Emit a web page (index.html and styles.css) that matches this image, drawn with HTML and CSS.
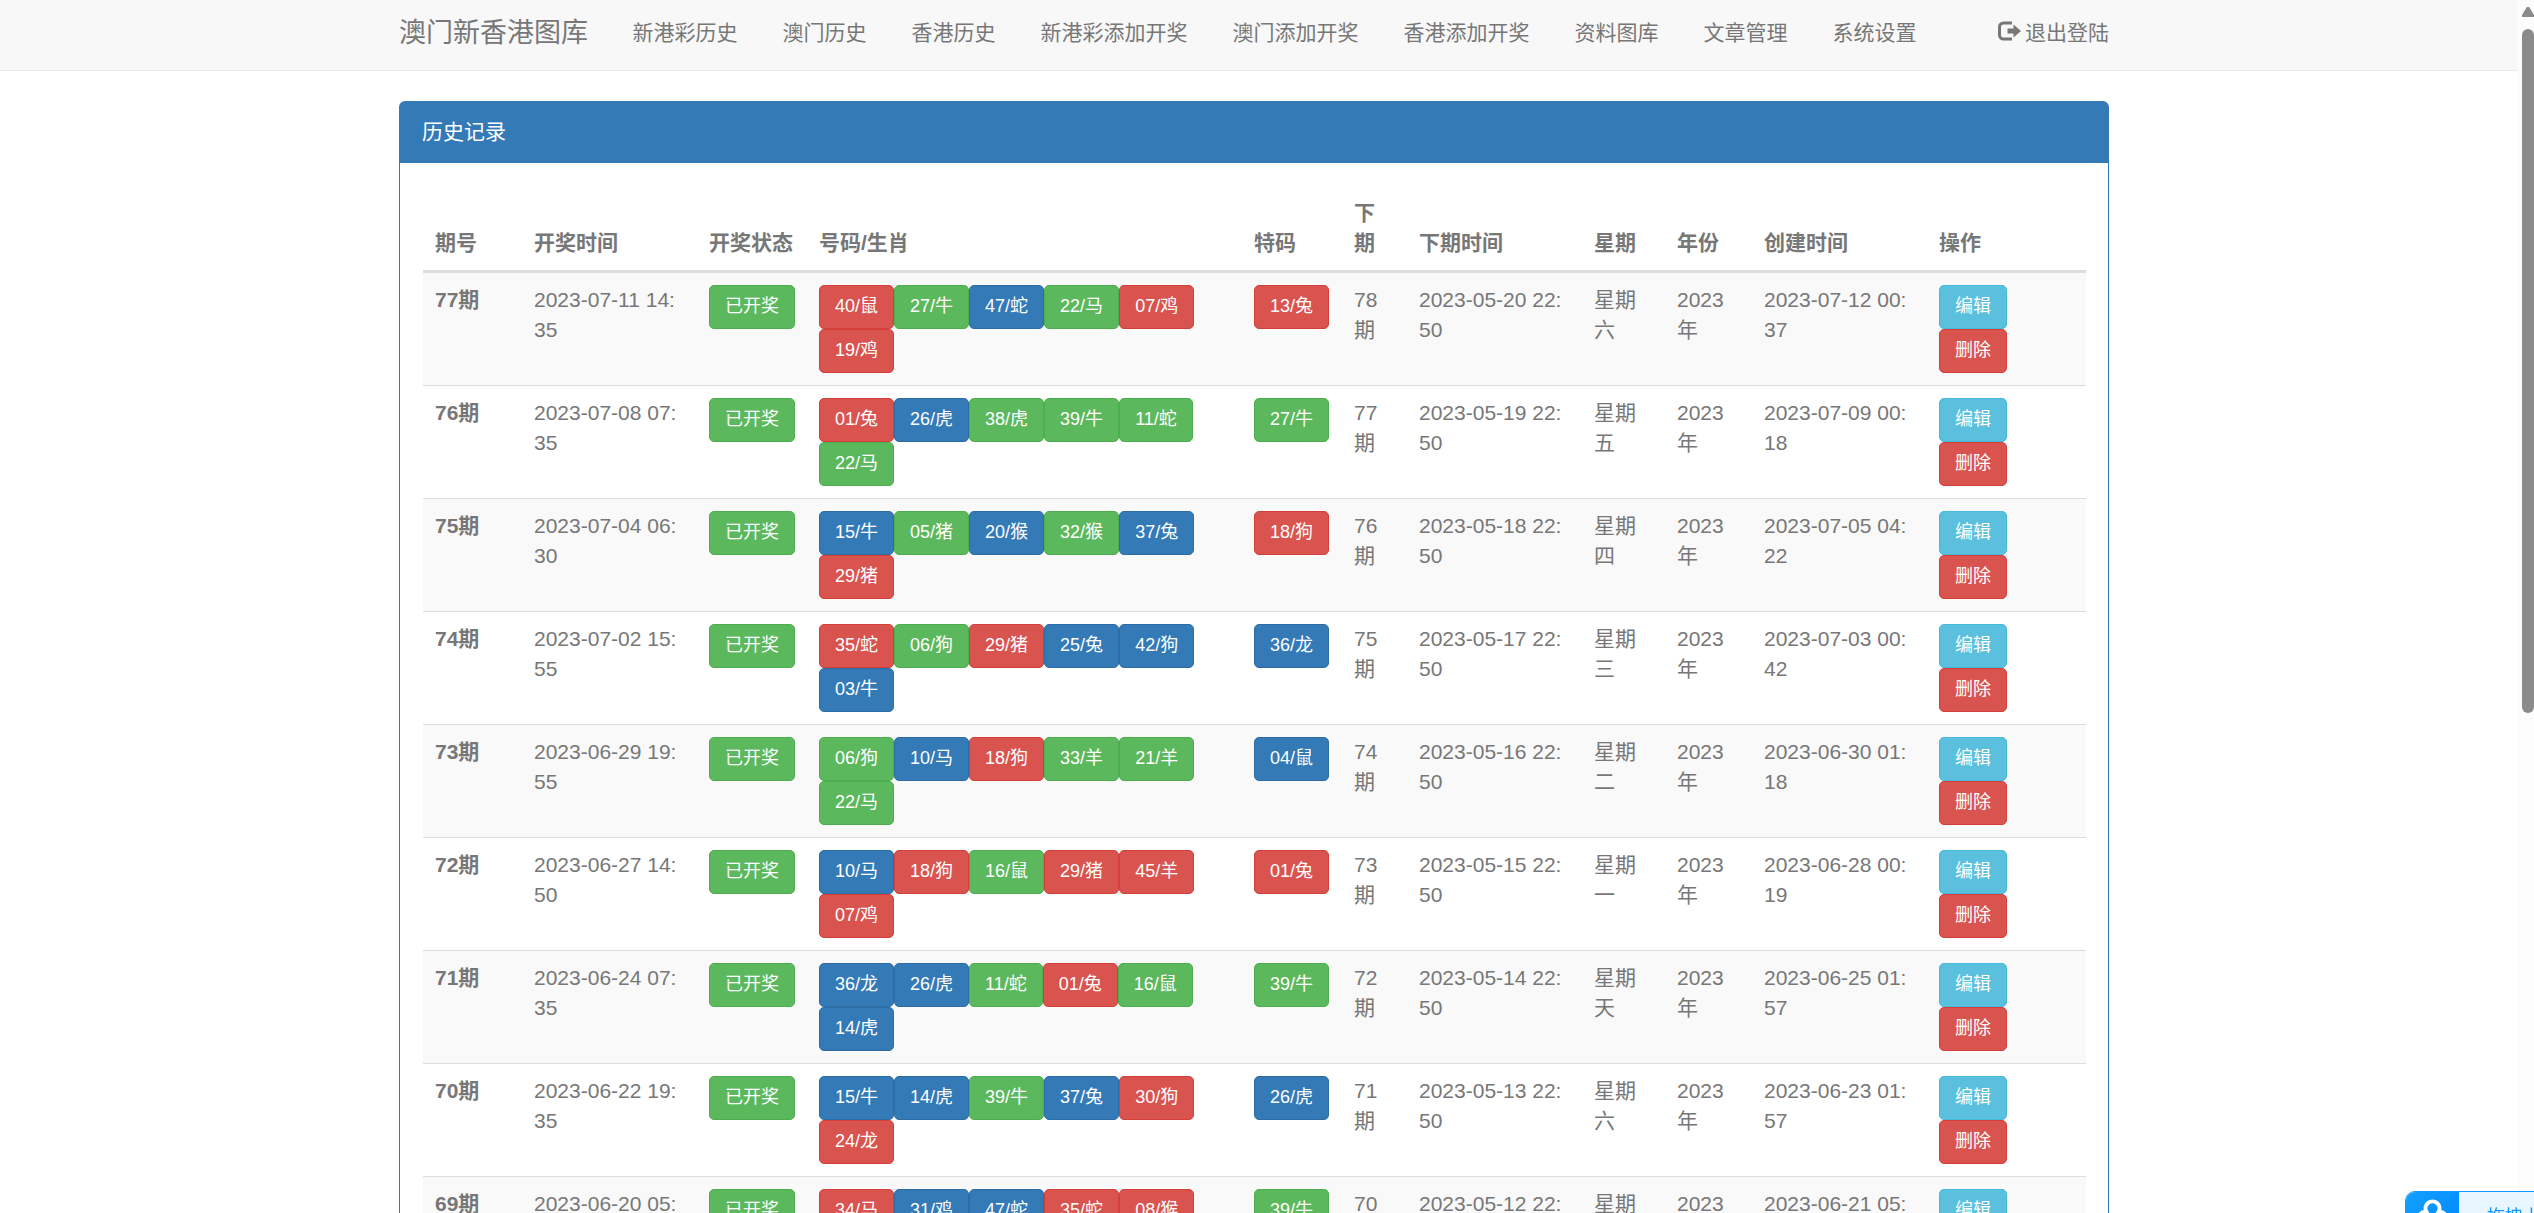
FILE: index.html
```html
<!DOCTYPE html>
<html lang="zh-CN">
<head>
  <meta charset="UTF-8">
  <meta name="viewport" content="width=device-width, initial-scale=1">
  <title>澳门新香港图库</title>
  <link rel="stylesheet" href="styles.css">
</head>
<body>
  <nav class="navbar">
    <div class="container">
      <a class="navbar-brand">澳门新香港图库</a>
      <ul class="nav">
        <li>新港彩历史</li>
        <li>澳门历史</li>
        <li>香港历史</li>
        <li>新港彩添加开奖</li>
        <li>澳门添加开奖</li>
        <li>香港添加开奖</li>
        <li>资料图库</li>
        <li>文章管理</li>
        <li>系统设置</li>
      </ul>
      <a class="logout">
        <svg viewBox="0 0 23 20" width="23" height="20">
          <path d="M14 2H5.500a4 4 0 0 0-4 4v8a4 4 0 0 0 4 4H14" fill="none" stroke="#777" stroke-width="3"/>
          <path d="M9.500 7.500h6V3.500l7.500 6.500-7.500 6.500v-4h-6z" fill="#777"/>
        </svg>
        退出登陆
      </a>
    </div>
  </nav>

  <div class="container">
    <div class="panel">
      <div class="panel-heading">历史记录</div>
      <div class="panel-body">
        <table class="table">
          <colgroup>
            <col class="c-no"><col class="c-time"><col class="c-state"><col class="c-balls"><col class="c-special"><col class="c-next">
            <col class="c-time"><col class="c-week"><col class="c-year"><col class="c-time"><col class="c-action">
          </colgroup>
          <thead>
            <tr>
              <th>期号</th><th>开奖时间</th><th>开奖状态</th><th>号码/生肖</th><th>特码</th><th>下期</th>
              <th>下期时间</th><th>星期</th><th>年份</th><th>创建时间</th><th>操作</th>
            </tr>
          </thead>
          <tbody id="list"></tbody>
        </table>
      </div>
    </div>
  </div>

  <!-- Scrollbar -->
  <div class="scrollbar">
    <div class="arrow"></div>
    <div class="thumb"></div>
  </div>

  <!-- Upload widget -->
  <div class="upload">
    <div class="upload-icon">
      <svg viewBox="0 0 54 44" width="54" height="44">
        <path d="M20 33h-1a6.500 6.500 0 0 1 0-13h1.500a7 7 0 1 1 12 0H34a6.500 6.500 0 0 1 0 13h-1" fill="none" stroke="#fff" stroke-width="4"/>
      </svg>
    </div>
    <div class="upload-text">拖拽上传</div>
  </div>

  <script>
    // 期号, 开奖时间, 号码, 特码, 下期时间, 星期, 创建时间
    const rows = [
      [77, '2023-07-11 14:35', '40/鼠 27/牛 47/蛇 22/马 07/鸡 19/鸡', '13/兔', '2023-05-20 22:50', '六', '2023-07-12 00:37'],
      [76, '2023-07-08 07:35', '01/兔 26/虎 38/虎 39/牛 11/蛇 22/马', '27/牛', '2023-05-19 22:50', '五', '2023-07-09 00:18'],
      [75, '2023-07-04 06:30', '15/牛 05/猪 20/猴 32/猴 37/兔 29/猪', '18/狗', '2023-05-18 22:50', '四', '2023-07-05 04:22'],
      [74, '2023-07-02 15:55', '35/蛇 06/狗 29/猪 25/兔 42/狗 03/牛', '36/龙', '2023-05-17 22:50', '三', '2023-07-03 00:42'],
      [73, '2023-06-29 19:55', '06/狗 10/马 18/狗 33/羊 21/羊 22/马', '04/鼠', '2023-05-16 22:50', '二', '2023-06-30 01:18'],
      [72, '2023-06-27 14:50', '10/马 18/狗 16/鼠 29/猪 45/羊 07/鸡', '01/兔', '2023-05-15 22:50', '一', '2023-06-28 00:19'],
      [71, '2023-06-24 07:35', '36/龙 26/虎 11/蛇 01/兔 16/鼠 14/虎', '39/牛', '2023-05-14 22:50', '天', '2023-06-25 01:57'],
      [70, '2023-06-22 19:35', '15/牛 14/虎 39/牛 37/兔 30/狗 24/龙', '26/虎', '2023-05-13 22:50', '六', '2023-06-23 01:57'],
      [69, '2023-06-20 05:35', '34/马 31/鸡 47/蛇 35/蛇 08/猴 12/龙', '39/牛', '2023-05-12 22:50', '五', '2023-06-21 05:35']
    ];
    const red = [1, 2, 7, 8, 12, 13, 18, 19, 23, 24, 29, 30, 34, 35, 40, 45, 46];
    const blue = [3, 4, 9, 10, 14, 15, 20, 25, 26, 31, 36, 37, 41, 42, 47, 48];

    // Ball button, colored by number
    function ball(text) {
      const n = parseInt(text, 10);
      const cls = red.includes(n) ? 'danger' : blue.includes(n) ? 'primary' : 'success';
      return `<span class="btn btn-${cls}">${text}</span>`;
    }

    document.getElementById('list').innerHTML = rows.map(r => `
      <tr>
        <th>${r[0]}期</th>
        <td>${r[1]}</td>
        <td><div class="btns"><span class="btn btn-success">已开奖</span></div></td>
        <td><div class="btns">${r[2].split(' ').map(ball).join('')}</div></td>
        <td><div class="btns">${ball(r[3])}</div></td>
        <td>${r[0] + 1}期</td>
        <td>${r[4]}</td>
        <td>星期${r[5]}</td>
        <td>2023年</td>
        <td>${r[6]}</td>
        <td><div class="btns"><span class="btn btn-info">编辑</span><span class="btn btn-danger">删除</span></div></td>
      </tr>`).join('');
  </script>
</body>
</html>
```
FILE: styles.css
```css
* { box-sizing: border-box; }
html, body { margin: 0; height: 100%; overflow: hidden; }
body {
  font-family: "Liberation Sans", "Noto Sans CJK SC", sans-serif;
  font-size: 21px; line-height: 30px; color: #777; background: #fff;
}
.container { width: 1710px; margin-left: 399px; }

/* Navbar */
.navbar { height: 71px; background: #f8f8f8; border-bottom: 1px solid #e7e7e7; margin-bottom: 30px; }
.navbar .container { display: flex; padding-top: 18px; }
.navbar-brand { font-size: 27px; margin-right: 22px; white-space: nowrap; }
.nav { display: flex; list-style: none; margin: 0; padding: 0; }
.nav li { padding: 0 22.5px; white-space: nowrap; }
.logout { display: flex; align-items: center; gap: 4px; height: 30px; margin-left: auto; }
.logout svg { margin-bottom: 4px; }

/* Panel */
.panel { border: 1px solid #337ab7; border-radius: 6px; }
.panel-heading { padding: 15px 22px 16px; background: #337ab7; color: #fff; border-radius: 4px 4px 0 0; }
.panel-body { padding: 23px; }

/* Table */
.table { width: 1663px; table-layout: fixed; border-collapse: separate; border-spacing: 0; word-break: break-all; }
.table th, .table td { padding: 12px; text-align: left; vertical-align: top; }
.table th { font-weight: bold; }
.table thead th { vertical-align: bottom; border-bottom: 3px solid #ddd; }
.table tbody tr + tr > * { border-top: 1px solid #ddd; }
.table tbody tr:nth-child(odd) { background: #f9f9f9; }
.c-no { width: 99px; }
.c-time { width: 175px; }
.c-state { width: 110px; }
.c-balls { width: 435px; }
.c-special { width: 100px; }
.c-next { width: 65px; }
.c-week { width: 83px; }
.c-year { width: 87px; }
.c-action { width: 159px; }

/* Buttons */
.btns { display: flex; flex-wrap: wrap; height: 88px; align-content: flex-start; }
.btn {
  height: 44px; padding: 7px 15px 8px; border: 1px solid; border-radius: 5px;
  font-size: 18px; line-height: 27px; color: #fff; white-space: nowrap;
}
.btn-success { background: #5cb85c; border-color: #4cae4c; }
.btn-danger { background: #d9534f; border-color: #d43f3a; }
.btn-primary { background: #337ab7; border-color: #2e6da4; }
.btn-info { background: #5bc0de; border-color: #46b8da; }

/* Scrollbar */
.scrollbar { position: fixed; top: 0; right: 0; bottom: 0; width: 17px; padding: 7px 0 0 5px; background: #fcfcfc; }
.arrow { width: 12px; height: 10px; background: #8b8b8b; clip-path: polygon(40% 0, 60% 0, 100% 80%, 100% 100%, 0 100%, 0 80%); }
.thumb { width: 12px; height: 684px; margin-top: 12px; border-radius: 6px; background: #8b8b8b; }

/* Upload widget */
.upload {
  position: fixed; left: 2405px; top: 1191px; display: flex; width: 180px; height: 44px;
  border: 1px solid #1296ff; border-radius: 10px 0 0 10px; background: #e8f7ff; overflow: hidden;
}
.upload-icon { width: 53px; background: linear-gradient(135deg, #12a0ff, #0088ff); }
.upload-text { padding: 10px 0 0 28px; color: #1296ff; font-size: 18px; white-space: nowrap; }
```
